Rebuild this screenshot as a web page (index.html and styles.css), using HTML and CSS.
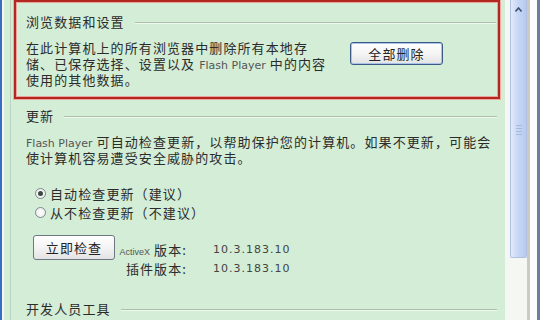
FILE: index.html
```html
<!DOCTYPE html>
<html lang="zh-CN">
<head>
<meta charset="utf-8">
<title>Flash Player 设置</title>
<link rel="stylesheet" href="styles.css">
</head>
<body>
<div class="window">
  <div class="frame-left"></div>
  <div class="panel">
    <div class="content">
      <section class="box">
        <div class="heading"><span>浏览数据和设置</span><i class="rule"></i></div>
        <div class="box-body">
          <p class="text">在此计算机上的所有浏览器中删除所有本地存<br>储、已保存选择、设置以及 <span class="latin">Flash Player</span> 中的内容<br>使用的其他数据。</p>
          <button class="btn btn-default">全部删除</button>
        </div>
      </section>
      <section class="sec update">
        <div class="heading"><span>更新</span><i class="rule"></i></div>
        <p class="text wide"><span class="latin">Flash Player</span> 可自动检查更新，以帮助保护您的计算机。如果不更新，可能会<br>使计算机容易遭受安全威胁的攻击。</p>
        <div class="radios">
          <label class="radio"><span class="dot on"></span><span>自动检查更新（建议）</span></label>
          <label class="radio"><span class="dot"></span><span>从不检查更新（不建议）</span></label>
        </div>
        <div class="check-row">
          <button class="btn btn-check">立即检查</button>
          <div class="versions">
            <span class="label"><span class="latin small">ActiveX</span> 版本:</span><span class="ver">10.3.183.10</span>
            <span class="label">插件版本:</span><span class="ver">10.3.183.10</span>
          </div>
        </div>
      </section>
      <section class="sec dev">
        <div class="heading"><span>开发人员工具</span><i class="rule"></i></div>
      </section>
    </div>
  </div>
  <div class="scrollbar">
    <div class="thumb">
      <svg class="arrow" width="7" height="5" viewBox="0 0 7 5"><path d="M0.5 4.5 L3.5 1 L6.5 4.5" fill="none" stroke="#3f5272" stroke-width="1.6"/></svg>
      <div class="grip"><i></i><i></i><i></i><i></i></div>
    </div>
  </div>
  <div class="frame-right"></div>
</div>
</body>
</html>
```
FILE: styles.css
```css
* { box-sizing: border-box; margin: 0; padding: 0; }
body {
  width: 540px; height: 320px; overflow: hidden; background: #fff;
  font-family: "Noto Sans CJK SC", sans-serif;
  font-size: 13px; letter-spacing: 1.1px; color: #2b2b2b;
}
.window { display: flex; width: 540px; height: 320px; overflow: hidden; }
.frame-left { width: 4px; flex: none; border-left: 2px solid #3b6cc4; background: #f3f7f3; }
.panel { width: 501px; flex: none; background: #d3edd6; padding: 0 5px 0 6px; }
.content { border-left: 1px solid #bcd5bf; padding-left: 3px; height: 100%; }

.box {
  width: 486px;
  border: 2px solid #b2271f;
  box-shadow: 0 0 0 1px #eea89f, inset 0 0 0 1px #eaa39a;
  padding: 12px 2px 9px 10px;
}
.heading { display: flex; align-items: center; height: 16px; line-height: 16px; white-space: nowrap; }
.heading .rule {
  flex: 1; height: 2px; margin: 2px 0 0 10px;
  border-top: 1px solid #a9c1ab; border-bottom: 1px solid #eef8ef;
}
.box-body { display: flex; align-items: flex-start; margin-top: 10px; }
.text { line-height: 16px; width: 310px; white-space: nowrap; }
.latin { font-family: "DejaVu Sans", sans-serif; font-size: 11px; letter-spacing: 0; color: #555; line-height: 11px; }
.latin.small { font-family: "Liberation Sans", sans-serif; font-size: 9px; }

.btn {
  font: inherit; letter-spacing: 1.1px; color: #222;
  background: linear-gradient(#ffffff, #f4f4f4 50%, #e3e3e3);
  border: 1px solid #6d7683; border-radius: 3px;
  flex: none;
}
.btn-default {
  width: 93px; height: 23px; margin: 2px 0 0 14px;
  border-color: #3c5a85; box-shadow: inset 0 0 0 1px #a9c4e8;
}
.btn-check { width: 82px; height: 25px; margin-left: 7px; }

.sec { width: 486px; padding: 0 3px 0 12px; }
.update { margin-top: 9px; }
.update .text { margin-top: 10px; width: auto; }
.radios { margin: 18px 0 0 9px; }
.radio { display: flex; align-items: center; gap: 4px; height: 19px; line-height: 19px; }
.dot {
  width: 11px; height: 11px; border-radius: 50%;
  border: 1px solid #7d8794; background: radial-gradient(#ffffff, #e6ebe6);
  display: flex; align-items: center; justify-content: center;
}
.dot.on::after { content: ""; width: 5px; height: 5px; border-radius: 50%; background: #3a4a3c; }

.check-row { display: flex; align-items: flex-start; margin-top: 13px; }
.versions {
  display: grid; grid-template-columns: 72px auto; column-gap: 26px;
  margin-top: 5px; line-height: 19px;
}
.versions .label { text-align: right; white-space: nowrap; }
.ver { font-family: "DejaVu Sans", sans-serif; font-size: 11px; letter-spacing: 1px; color: #444; }

.dev { margin-top: 23px; }

.scrollbar { width: 25px; flex: none; background: #f4f7f2; padding-left: 5px; border-right: 3px solid #c9ccc4; }
.thumb {
  width: 17px; height: 258px;
  background: linear-gradient(to right, #e2eafb, #c7d7f5 45%, #b8caef);
  border: 1px solid #afc0e2; border-top: none; border-radius: 0 0 2px 2px;
  display: flex; flex-direction: column; align-items: center;
}
.arrow { margin-top: 7px; }
.grip { margin-top: 113px; display: flex; flex-direction: column; gap: 2px; }
.grip i { display: block; width: 6px; height: 1px; background: #a6b8dc; }
.frame-right { width: 10px; flex: none; background: #fbfcfb; border-right: 3px solid #6a7f9c; }
```
